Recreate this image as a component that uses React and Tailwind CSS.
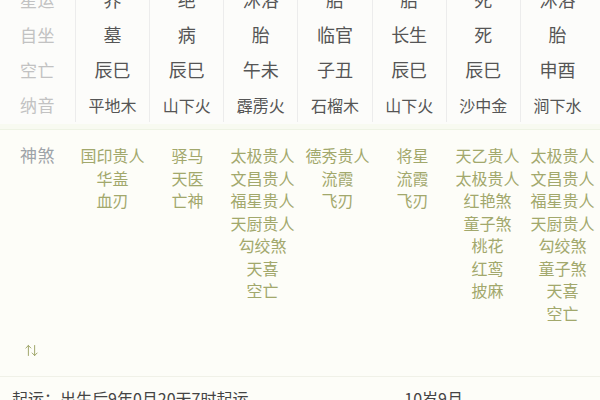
import { ArrowUpDown } from 'lucide-react';

const font = { fontFamily: '"Noto Sans CJK SC", "Noto Sans", sans-serif' };

const rows = [
  { label: '星运', cells: ['养', '绝', '沐浴', '胎', '胎', '死', '沐浴'], small: false },
  { label: '自坐', cells: ['墓', '病', '胎', '临官', '长生', '死', '胎'], small: false },
  { label: '空亡', cells: ['辰巳', '辰巳', '午未', '子丑', '辰巳', '辰巳', '申酉'], small: false },
  { label: '纳音', cells: ['平地木', '山下火', '霹雳火', '石榴木', '山下火', '沙中金', '涧下水'], small: true },
];

const shensha = [
  ['国印贵人', '华盖', '血刃'],
  ['驿马', '天医', '亡神'],
  ['太极贵人', '文昌贵人', '福星贵人', '天厨贵人', '勾绞煞', '天喜', '空亡'],
  ['德秀贵人', '流霞', '飞刃'],
  ['将星', '流霞', '飞刃'],
  ['天乙贵人', '太极贵人', '红艳煞', '童子煞', '桃花', '红鸾', '披麻'],
  ['太极贵人', '文昌贵人', '福星贵人', '天厨贵人', '勾绞煞', '童子煞', '天喜', '空亡'],
];

const App = () => {
  return (
    <div className="w-[600px] h-[400px] overflow-hidden bg-[#fdfdf8]" style={font}>
      {/* pillar table */}
      <div className="mt-[-18px] bg-[#fcfcfa] pr-[6px]">
        <div className="grid grid-cols-[75px_repeat(7,1fr)]">
          <div className="flex flex-col">
            {rows.map(r => (
              <div key={r.label} className="h-[35px] flex items-center justify-center text-[17px] text-[#c2c2c2] tracking-wide">
                {r.label}
              </div>
            ))}
          </div>
          {rows[0].cells.map((_, ci) => (
            <div key={ci} className="flex flex-col border-l border-[#ececec]">
              {rows.map(r => (
                <div
                  key={r.label}
                  className={`h-[35px] flex items-center justify-center text-[#555] ${r.small ? 'text-[16px]' : 'text-[18px]'}`}
                >
                  {r.cells[ci]}
                </div>
              ))}
            </div>
          ))}
        </div>
        <div className="h-[2px]" />
      </div>
      <div className="h-[6px] bg-[#f8faf1] border-b border-[#eef3e4]" />

      {/* shensha */}
      <div className="grid grid-cols-[75px_repeat(7,75px)] pt-[14px] h-[247px] border-b border-[#f0f1e8] relative">
        <div className="flex justify-center text-[17px] text-[#9da3a8] leading-[22.5px] tracking-wide">神煞</div>
        {shensha.map((col, i) => (
          <div key={i} className="flex flex-col items-center">
            {col.map((s, j) => (
              <div key={j} className="text-[16px] leading-[22.5px] text-[#a2a86c] whitespace-nowrap">{s}</div>
            ))}
          </div>
        ))}
        <div className="absolute left-[24px] bottom-[18px] text-[#9ba163]">
          <ArrowUpDown size={15} strokeWidth={1.5} />
        </div>
      </div>

      {/* qiyun */}
      <div className="flex items-center h-[30px] pt-[12px] px-[12px] text-[16px] text-[#444]">
        <span>起运：出生后9年0月20天7时起运</span>
        <span className="ml-auto mr-[125px]">10岁9月</span>
      </div>
    </div>
  );
};

export default App;
